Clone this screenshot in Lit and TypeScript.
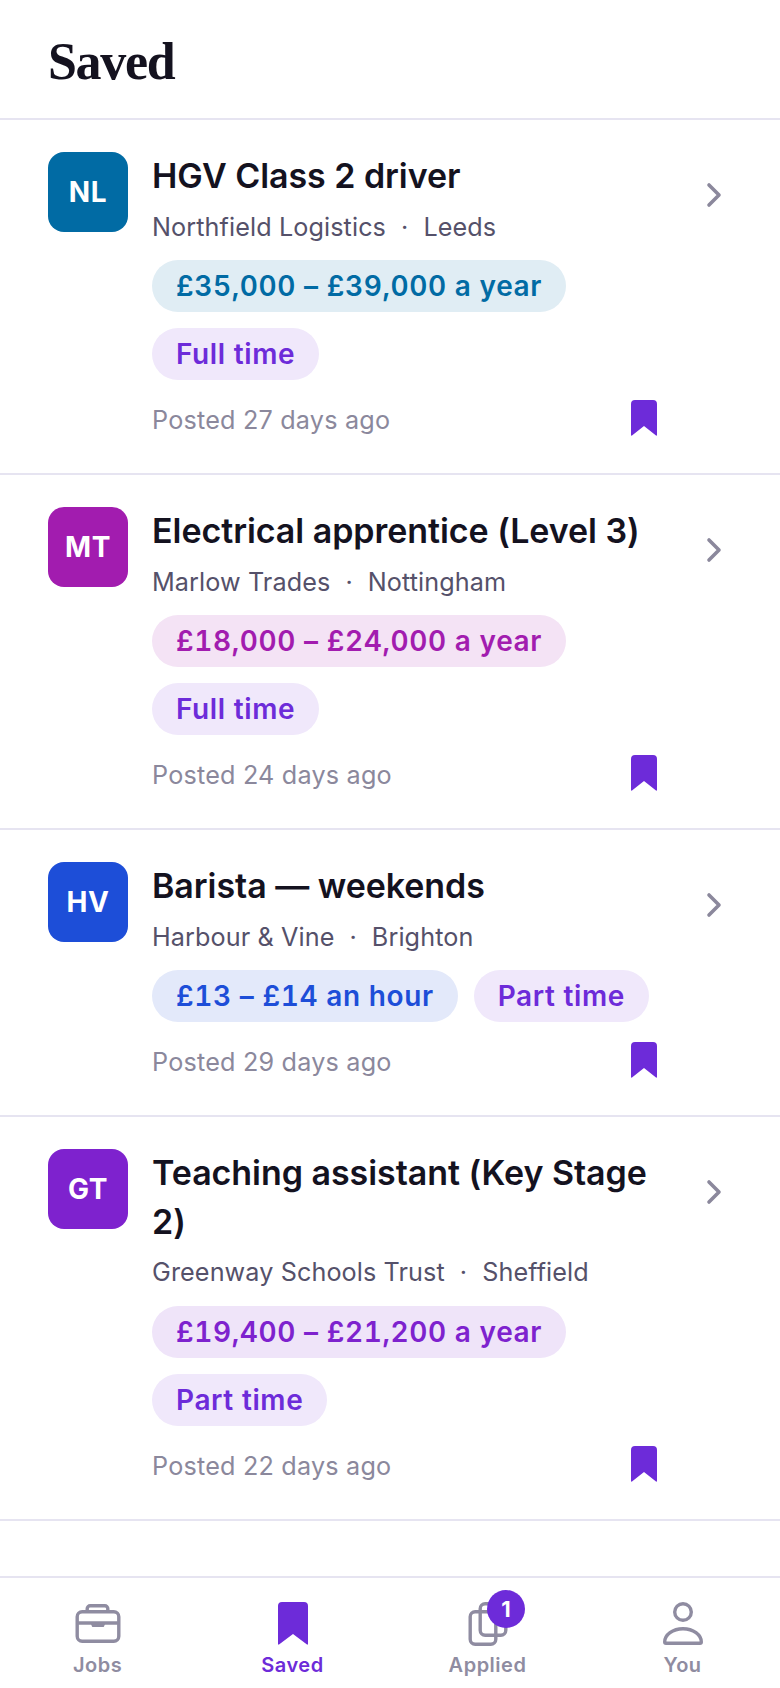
import { LitElement, html, css } from 'lit';
import { customElement } from 'lit/decorators.js';

const jobs = [
  { initials: 'NL', title: 'HGV Class 2 driver', company: 'Northfield Logistics', place: 'Leeds', pay: '£35,000 – £39,000 a year', hours: 'Full time', posted: 'Posted 27 days ago', color: '#016ba4', tint: '#e0edf4' },
  { initials: 'MT', title: 'Electrical apprentice (Level 3)', company: 'Marlow Trades', place: 'Nottingham', pay: '£18,000 – £24,000 a year', hours: 'Full time', posted: 'Posted 24 days ago', color: '#a21caf', tint: '#f4e3f5' },
  { initials: 'HV', title: 'Barista — weekends', company: 'Harbour & Vine', place: 'Brighton', pay: '£13 – £14 an hour', hours: 'Part time', posted: 'Posted 29 days ago', color: '#1d4ed8', tint: '#e3e9fa' },
  { initials: 'GT', title: 'Teaching assistant (Key Stage 2)', company: 'Greenway Schools Trust', place: 'Sheffield', pay: '£19,400 – £21,200 a year', hours: 'Part time', posted: 'Posted 22 days ago', color: '#7e22ce', tint: '#efe4f9' },
];

@customElement('app-root')
export class AppRoot extends LitElement {
  static styles = css`
    :host {
      display: flex;
      flex-direction: column;
      height: 1688px;
      background: #fff;
      font-family: Inter, "Liberation Sans", sans-serif;
      color: #14121f;
    }
    .header {
      height: 120px;
      box-sizing: border-box;
      padding: 30px 48px 0;
      border-bottom: 2px solid #e6e4f1;
    }
    h1 {
      margin: 0;
      font: 700 52px/64px "Liberation Serif", serif;
      letter-spacing: -1.3px;
    }
    .list { flex: 1; }
    .job {
      display: flex;
      gap: 24px;
      padding: 32px 48px 33px;
      border-bottom: 2px solid #e6e4f1;
    }
    .logo {
      flex: none;
      width: 80px;
      height: 80px;
      border-radius: 16px;
      display: flex;
      align-items: center;
      justify-content: center;
      color: #fff;
      font-size: 28px;
      font-weight: 700;
      letter-spacing: 0.6px;
    }
    .body { flex: 1; min-width: 0; }
    .title {
      font-size: 34px;
      line-height: 48.5px;
      font-weight: 600;
      letter-spacing: -0.05px;
    }
    .meta {
      margin-top: 8px;
      font-size: 25.2px;
      line-height: 36px;
      letter-spacing: 0.1px;
      color: #55516a;
      display: flex;
      gap: 15px;
    }
    .chips {
      display: flex;
      flex-wrap: wrap;
      gap: 16px;
      margin-top: 15.5px;
    }
    .chip {
      padding: 0 24px;
      height: 52px;
      line-height: 52px;
      border-radius: 26px;
      font-size: 28px;
      font-weight: 600;
      letter-spacing: 0.6px;
      font-variant-numeric: tabular-nums;
    }
    .hours { background: #f0e8fb; color: #6d2bd9; }
    .foot {
      display: flex;
      justify-content: space-between;
      align-items: center;
      height: 40px;
      margin-top: 20px;
      font-size: 25.2px;
      letter-spacing: 0.2px;
      color: #8b889c;
    }
    .foot svg { width: 26px; height: 36px; color: #6d2bd9; margin: 0 19px 4px 0; }
    .chev { flex: none; width: 32px; height: 32px; margin-top: 27px; color: #8b889c; }
    nav {
      height: 112px;
      box-sizing: border-box;
      border-top: 2px solid #e6e4f1;
      display: grid;
      grid-template-columns: repeat(4, 1fr);
    }
    .tab {
      display: flex;
      flex-direction: column;
      align-items: center;
      padding-top: 24px;
      font-size: 20px;
      line-height: 26px;
      font-weight: 600;
      letter-spacing: 0.5px;
      color: #8f8ca1;
    }
    .tab.on { color: #6d2bd9; }
    .icon { position: relative; width: 48px; height: 48px; margin-bottom: 2px; }
    .icon svg { display: block; width: 48px; height: 48px; overflow: visible; }
    .badge {
      position: absolute;
      top: -12px;
      right: -13.5px;
      width: 38px;
      height: 38px;
      border-radius: 50%;
      background: #6d2bd9;
      color: #fff;
      font-size: 22px;
      font-weight: 700;
      line-height: 38px;
      text-align: center;
      letter-spacing: 0;
    }
  `;

  renderJob(j: (typeof jobs)[number]) {
    return html`
      <div class="job">
        <div class="logo" style="background:${j.color}">${j.initials}</div>
        <div class="body">
          <div class="title">${j.title}</div>
          <div class="meta"><span>${j.company}</span><span>·</span><span>${j.place}</span></div>
          <div class="chips">
            <span class="chip" style="background:${j.tint};color:${j.color}">${j.pay}</span>
            <span class="chip hours">${j.hours}</span>
          </div>
          <div class="foot">
            <span>${j.posted}</span>
            <svg viewBox="0 0 26 36"><path d="M4 0h18a4 4 0 0 1 4 4v31a.6.6 0 0 1-1 .5L13 26 1 35.500a.6.6 0 0 1-1-.5V4a4 4 0 0 1 4-4z" fill="currentColor"/></svg>
          </div>
        </div>
        <svg class="chev" viewBox="0 0 32 32" fill="none" stroke="currentColor" stroke-width="3.6" stroke-linecap="round" stroke-linejoin="round"><path d="M9 6l10 10-10 10"/></svg>
      </div>
    `;
  }

  render() {
    return html`
      <div class="header"><h1>Saved</h1></div>
      <div class="list">${jobs.map((j) => this.renderJob(j))}</div>
      <nav>
        <div class="tab">
          <div class="icon">
            <svg viewBox="0 0 48 48" fill="none" stroke="currentColor" stroke-width="3.4" stroke-linejoin="round">
              <rect x="3.200" y="9.700" width="41.600" height="29.600" rx="5"/>
              <path d="M13.200 9.700V6.700a3 3 0 0 1 3-3h14.600a3 3 0 0 1 3 3v3"/>
              <path d="M3.200 21h41.600"/>
              <path d="M16.500 21h15l-1.500 3.500a1 1 0 0 1-1 .5H19a1 1 0 0 1-1-.5z" fill="currentColor" stroke="none"/>
            </svg>
          </div>
          Jobs
        </div>
        <div class="tab on">
          <div class="icon">
            <svg viewBox="0 0 48 48"><path d="M13 0h22a4 4 0 0 1 4 4v38a.6.6 0 0 1-1 .5L24 32 10 42.500a.6.6 0 0 1-1-.5V4a4 4 0 0 1 4-4z" fill="currentColor"/></svg>
          </div>
          Saved
        </div>
        <div class="tab">
          <div class="icon">
            <svg viewBox="0 0 48 48" fill="none" stroke="currentColor" stroke-width="3.4" stroke-linejoin="round">
              <rect x="16.200" y="1.700" width="25.600" height="31.600" rx="5"/>
              <rect x="6.200" y="9.700" width="25.600" height="32.600" rx="5"/>
            </svg>
            <span class="badge">1</span>
          </div>
          Applied
        </div>
        <div class="tab">
          <div class="icon">
            <svg viewBox="0 0 48 48" fill="none" stroke="currentColor" stroke-width="3.4" stroke-linejoin="round">
              <circle cx="24" cy="10" r="8.300"/>
              <path d="M5.700 40c0-7 8-13.300 18.300-13.300S42.300 33 42.300 40c0 .9-.4 1.300-1.300 1.300H7c-.9 0-1.300-.4-1.300-1.300z"/>
            </svg>
          </div>
          You
        </div>
      </nav>
    `;
  }
}
